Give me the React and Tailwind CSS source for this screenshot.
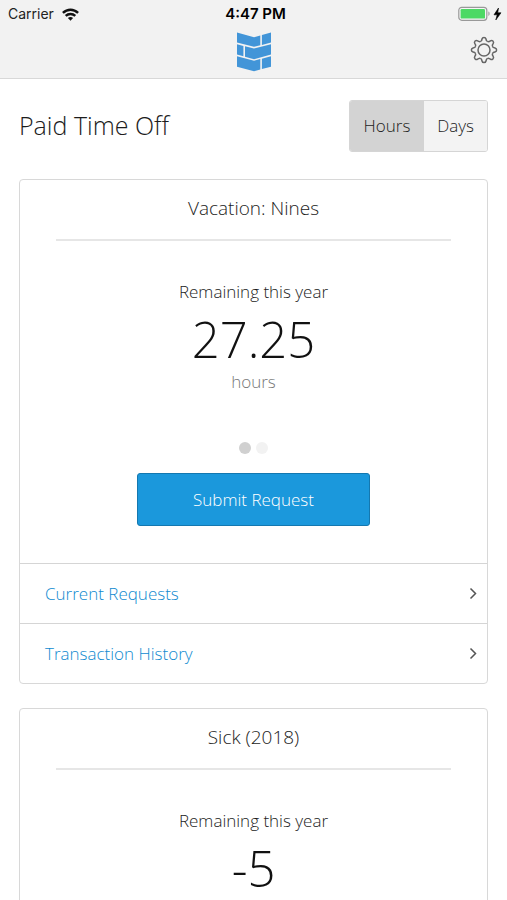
import React, {useState} from 'react';

const balances = [
    {id: 1, title: "Vacation: Nines", value: {Hours: "27.25", Days: "3.41"}},
    {id: 2, title: "Sick (2018)", value: {Hours: "-5", Days: "-0.63"}},
];

const teeth = [0, 45, 90, 135, 180, 225, 270, 315];


function StatusBar() {
    return (
        <div className="grid grid-cols-3 items-center h-7 pl-2 pr-1 font-['Inter','Liberation_Sans',sans-serif] font-normal text-[#222]">
            <div className="flex items-center gap-2">
                <span className="text-sm">Carrier</span>
                <svg width="17" height="13" viewBox="0 0 17 13" fill="none" stroke="#111" strokeWidth="2.4">
                    <path d="M.9 4.9C5.3.6 11.7.6 16.1 4.9"/>
                    <path d="M3.7 7.9C6.4 5.3 10.6 5.3 13.3 7.9"/>
                    <path d="M5.9 10.1C7.4 8.7 9.6 8.7 11.1 10.1L8.5 12.7z" fill="#111" stroke="none"/>
                </svg>
            </div>
            <div className="text-center text-[15px] font-semibold text-black">4:47 PM</div>
            <div className="flex items-center justify-end">
                <svg width="45" height="16" viewBox="0 0 45 16">
                    <rect x=".8" y="1.3" width="28" height="13" rx="3" fill="#f6f6f6" stroke="#999" strokeWidth="1.2"/>
                    <rect x="2.6" y="3" width="24.4" height="9.6" rx="1.2" fill="#4cd964"/>
                    <path d="M30.4 5.6c1.6.6 1.6 3.8 0 4.4z" fill="#999"/>
                    <path d="M40.5 2 36 8.8h3.2L37.8 14l5.2-7.2h-3.3z" fill="#000" stroke="#000" strokeWidth=".6"/>
                </svg>
            </div>
        </div>
    );
}

function Logo() {
    return (
        <svg width="34" height="40" viewBox="0 0 34 40" fill="#4295d8">
            <path d="M0 .5 17 5.2 23.3 3.4V13.2L17 14.8 0 10.6z"/>
            <path d="M24.9 3 34 .5V10.6L24.9 12.9z"/>
            <path d="M0 12.2 6.4 13.9V24.2L0 22.6z"/>
            <path d="M8 14.3 17 16.6 34 12.2V22.6L17 27.2 8 24.8z"/>
            <path d="M0 24.3 17 28.8 23.3 27.1V37.4L17 39.2 0 34.8z"/>
            <path d="M24.9 26.7 34 24.3V34.8L24.9 37.1z"/>
        </svg>
    );
}

function Gear() {
    return (
        <svg width="28" height="28" viewBox="-14 -14 28 28" fill="none" stroke="#666" strokeWidth="1.5">
            {teeth.map((angle) => (
                <path key={angle} transform={`rotate(${angle})`}
                      d="M-3.7 -8.9C-2.6 -8.5 -2.3 -9.6 -2 -11C-1.7 -12.3 -1.1 -12.6 0 -12.6S1.7 -12.3 2 -11C2.3 -9.6 2.6 -8.5 3.7 -8.9"/>
            ))}
            <circle r="6"/>
        </svg>
    );
}

function LinkRow({label}) {
    return (
        <a href="#" className="flex h-[60px] items-center justify-between border-t border-[#d5d5d5] pl-[25px] pr-2 text-[17px] text-[#0f8ad0]">
            {label}
            <svg width="12" height="14" viewBox="0 0 12 14" fill="none" stroke="#555" strokeWidth="1.5">
                <path d="M3.5 1.5 8.5 6.5l-5 5"/>
            </svg>
        </a>
    );
}

function BalanceCard({title, value, unit}) {
    return (
        <section className="rounded-sm border border-[#d8d8d8] bg-white">
            <div className="px-9">
                <h2 className="border-b-2 border-[#e6e6e6] pt-3 pb-[15px] text-center text-[19px] leading-8">{title}</h2>
            </div>
            <div className="flex flex-col items-center pt-[39px] pb-[37px]">
                <p className="text-[17px] leading-6">Remaining this year</p>
                <p className="mt-[5px] text-[49px] leading-[61px] text-[#111]">{value}</p>
                <p className="text-[17px] leading-6 text-[#777]">{unit.toLowerCase()}</p>
                <div className="mt-12 flex gap-[5px]">
                    <span className="size-3 rounded-full bg-[#d0d0d0]"/>
                    <span className="size-3 rounded-full bg-[#f2f2f2]"/>
                </div>
                <button type="button"
                        className="mt-[19px] h-[53px] w-1/2 rounded-[3px] border border-[#1478b0] bg-[#1b98dc] text-[17px] text-white">
                    Submit Request
                </button>
            </div>
            <LinkRow label="Current Requests"/>
            <LinkRow label="Transaction History"/>
        </section>
    );
}

export default function App() {

    const [unit, setUnit] = useState("Hours")

    return (
        <div className="min-h-screen bg-white font-['Open_Sans','Liberation_Sans',sans-serif] font-light text-[#1c1c1c]">
            <header className="border-b border-[#d8d8d8] bg-[#f2f2f2]">
                <StatusBar/>
                <div className="grid h-[50px] grid-cols-3 px-[9px] pt-1">
                    <div className="col-start-2 flex justify-center">
                        <Logo/>
                    </div>
                    <div className="flex justify-end pt-1">
                        <button type="button" aria-label="Settings" className="size-7">
                            <Gear/>
                        </button>
                    </div>
                </div>
            </header>

            <main className="px-[19px] pt-[21px]">
                <div className="flex items-center justify-between">
                    <h1 className="text-[25px] font-light">Paid Time Off</h1>
                    <div className="flex h-[52px] overflow-hidden rounded-[3px] border border-[#d5d5d5] text-[17px]">
                        <button type="button" onClick={() => setUnit("Hours")}
                                className={`w-[74px] ${unit === "Hours" ? "bg-[#d3d3d3]" : "bg-[#f3f3f3]"}`}>
                            Hours
                        </button>
                        <button type="button" onClick={() => setUnit("Days")}
                                className={`w-[63px] ${unit === "Days" ? "bg-[#d3d3d3]" : "bg-[#f3f3f3]"}`}>
                            Days
                        </button>
                    </div>
                </div>

                <div className="mt-[27px] flex flex-col gap-6">
                    {balances.map((item) => (
                        <BalanceCard key={item.id} title={item.title} value={item.value[unit]} unit={unit}/>
                    ))}
                </div>
            </main>
        </div>
    );
}
